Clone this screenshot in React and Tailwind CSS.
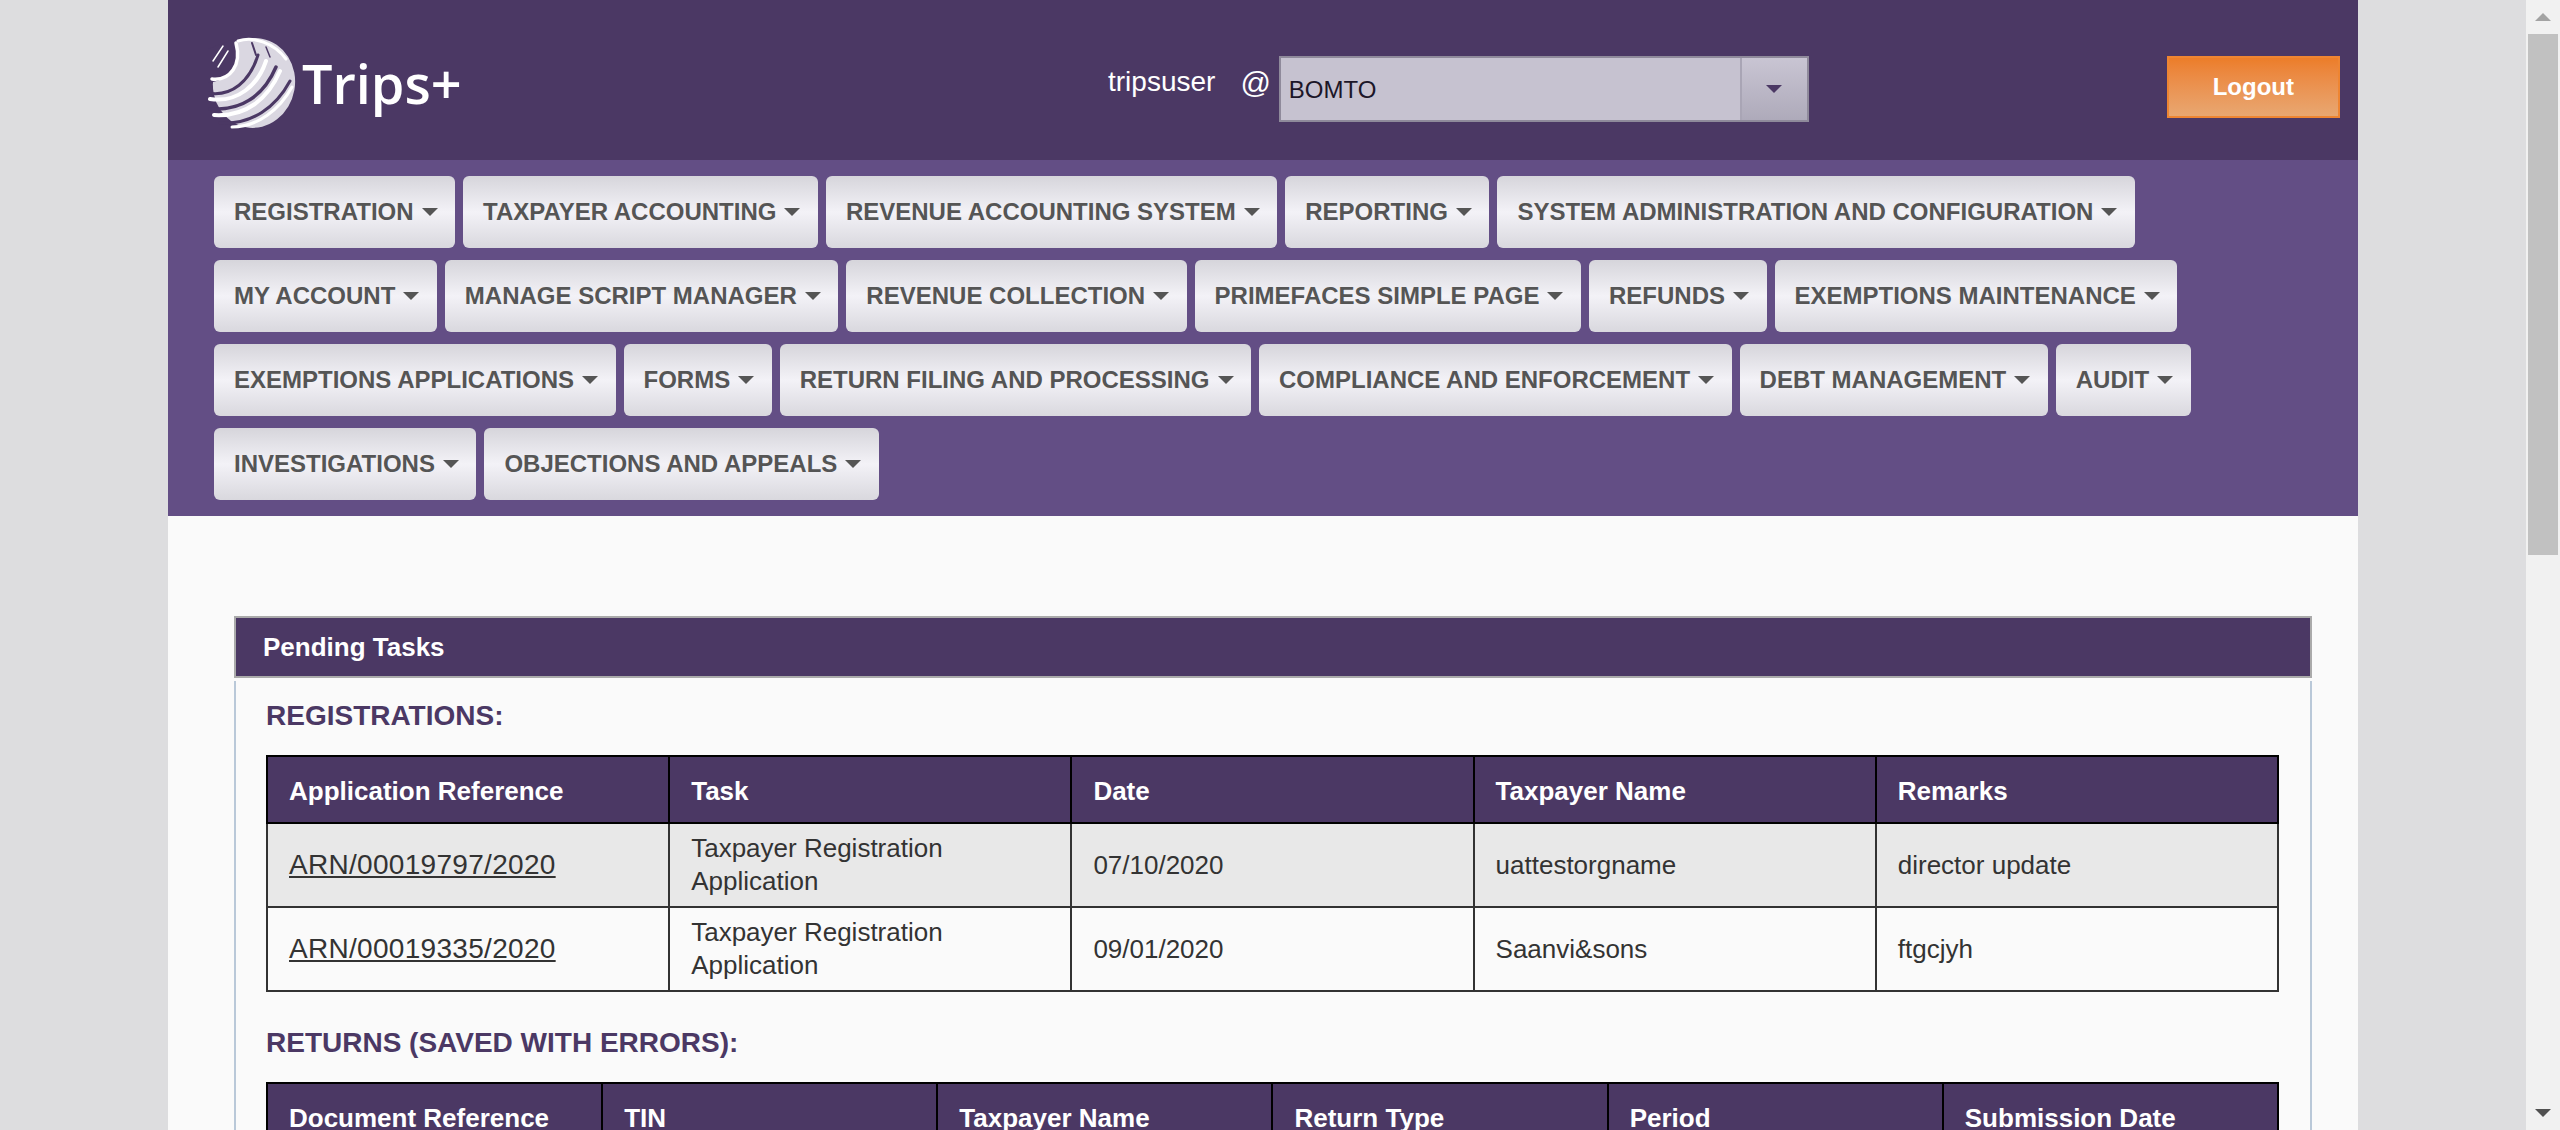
import React from 'react';

const menuRows = [
  ['REGISTRATION', 'TAXPAYER ACCOUNTING', 'REVENUE ACCOUNTING SYSTEM', 'REPORTING', 'SYSTEM ADMINISTRATION AND CONFIGURATION'],
  ['MY ACCOUNT', 'MANAGE SCRIPT MANAGER', 'REVENUE COLLECTION', 'PRIMEFACES SIMPLE PAGE', 'REFUNDS', 'EXEMPTIONS MAINTENANCE'],
  ['EXEMPTIONS APPLICATIONS', 'FORMS', 'RETURN FILING AND PROCESSING', 'COMPLIANCE AND ENFORCEMENT', 'DEBT MANAGEMENT', 'AUDIT'],
  ['INVESTIGATIONS', 'OBJECTIONS AND APPEALS'],
];

const registrations = [
  { ref: 'ARN/00019797/2020', date: '07/10/2020', name: 'uattestorgname', remarks: 'director update' },
  { ref: 'ARN/00019335/2020', date: '09/01/2020', name: 'Saanvi&sons', remarks: 'ftgcjyh' },
];

const returnColumns = ['Document Reference', 'TIN', 'Taxpayer Name', 'Return Type', 'Period', 'Submission Date'];
const registrationColumns = ['Application Reference', 'Task', 'Date', 'Taxpayer Name', 'Remarks'];

function Globe() {
  return (
    <svg width="88" height="92" viewBox="0 0 88 92" className="shrink-0">
      <ellipse cx="46" cy="46" rx="41" ry="45" fill="#dad7e1" transform="rotate(10 46 46)" />
      {/* dark bay on the upper left, then the gaps between the swooshes */}
      <path d="M0 12 L26 2 C36 20 28 42 0 46 Z" fill="#4b3864" />
      <g fill="none" stroke="#4b3864" strokeLinecap="round">
        <path d="M0 56 C24 60 42 44 50 18" strokeWidth="3" />
        <path d="M2 72 C34 74 56 58 68 30" strokeWidth="3.5" />
        <path d="M12 86 C44 88 68 70 82 44" strokeWidth="3" />
        <path d="M44 6 L48 18" strokeWidth="2" />
        <path d="M58 10 L62 20" strokeWidth="1.5" />
      </g>
      <g fill="none" stroke="#ffffff" strokeLinecap="round">
        <path d="M4 42 C22 44 34 28 28 6" strokeWidth="3.5" />
        <path d="M2 62 C30 66 50 48 58 24" strokeWidth="4" />
        <path d="M6 78 C38 80 60 62 72 34" strokeWidth="4" />
        <path d="M24 90 C50 90 72 72 84 50" strokeWidth="3" />
        <path d="M30 4 C46 -1 66 6 78 22" strokeWidth="3" />
        <path d="M5 24 L15 9" strokeWidth="1.5" />
        <path d="M10 30 L20 14" strokeWidth="1.5" />
      </g>
    </svg>
  );
}

function Caret({ color = 'border-t-[#555555]' }) {
  return <span className={`inline-block w-0 h-0 border-x-[8px] border-x-transparent border-t-[8px] ${color}`} />;
}

function Header() {
  return (
    <header className="h-[160px] bg-[#4b3864] flex items-center pl-[40px]">
      <div className="flex items-center w-[900px] mt-[5px]">
        <Globe />
        <span className="ml-[6px] text-white text-[54px] leading-none font-semibold font-['Open_Sans',sans-serif]">Trips+</span>
      </div>
      <div className="flex items-center mt-[18px] text-white text-[28px]">
        <span className="-mt-[15px]">tripsuser</span>
        <span className="ml-[25px] -mt-[14px] text-[30px]">@</span>
        <div className="ml-[8px] h-[66px] w-[530px] flex bg-[#c6c2d0] border-2 border-[#8f8a9b] text-[#1c1628] text-[24px]">
          <div className="flex-1 flex items-center pl-[8px] pt-[2px]">BOMTO</div>
          <div className="w-[67px] flex items-center justify-center border-l-2 border-[#a9a5b5] bg-linear-to-b from-[#c9c5d3] to-[#aeaaba]">
            <Caret color="border-t-[#4b3864]" />
          </div>
        </div>
      </div>
      <button className="ml-[358px] w-[173px] h-[62px] mt-[14px] border-2 border-[#ee8532] bg-linear-to-b from-[#ec7d28] to-[#e8a771] text-white text-[24px] font-bold">
        Logout
      </button>
    </header>
  );
}

function Nav() {
  return (
    <nav className="h-[356px] bg-[#634e85] pl-[46px] pt-[16px] flex flex-col gap-[12px]">
      {menuRows.map((row) => (
        <div key={row[0]} className="flex gap-[8px]">
          {row.map((item) => (
            <div
              key={item}
              className="h-[72px] pl-[20px] pr-[17.5px] flex items-center gap-[8px] rounded-[6px] bg-linear-to-b from-[#d6d5db] via-[#f3f2f7] to-[#d9d8de] text-[#555555] text-[24px] font-bold whitespace-nowrap"
            >
              {item}
              <Caret />
            </div>
          ))}
        </div>
      ))}
    </nav>
  );
}

function HeadCell({ children }) {
  return <th className="h-[67px] pl-[21px] pr-[20px] pt-[3px] border-2 border-black bg-[#4b3864] text-white text-[26px] font-bold text-left">{children}</th>;
}

function BodyCell({ children }) {
  return <td className="h-[84px] pl-[21px] pr-[20px] border-2 border-[#333333] text-[#333333] text-[26px] leading-[33px]">{children}</td>;
}

function Panel() {
  return (
    <section className="ml-[66px] mr-[46px] mt-[100px]">
      <div className="h-[62px] flex items-center pl-[27px] border-2 border-[#aaaaaa] bg-[#4b3864] text-white text-[26px] font-bold">
        Pending Tasks
      </div>
      <div className="mt-[3px] border-x-2 border-[#b9c8d8] pl-[30px] pr-[31px]">
        <h2 className="pt-[19px] pb-[23px] leading-[32px] text-[#4b3864] text-[28px] font-bold">REGISTRATIONS:</h2>
        <table className="w-full table-fixed border-collapse">
          <thead>
            <tr>
              {registrationColumns.map((c) => <HeadCell key={c}>{c}</HeadCell>)}
            </tr>
          </thead>
          <tbody>
            {registrations.map((r, idx) => (
              <tr key={r.ref} className={idx === 0 ? 'bg-[#e8e8e8]' : ''}>
                <BodyCell><a className="underline text-[28px] tracking-[0.3px]">{r.ref}</a></BodyCell>
                <BodyCell>Taxpayer Registration Application</BodyCell>
                <BodyCell>{r.date}</BodyCell>
                <BodyCell>{r.name}</BodyCell>
                <BodyCell>{r.remarks}</BodyCell>
              </tr>
            ))}
          </tbody>
        </table>
        <h2 className="pt-[35px] pb-[23px] leading-[32px] text-[#4b3864] text-[28px] font-bold">RETURNS (SAVED WITH ERRORS):</h2>
        <table className="w-full table-fixed border-collapse">
          <thead>
            <tr>
              {returnColumns.map((c) => <HeadCell key={c}>{c}</HeadCell>)}
            </tr>
          </thead>
        </table>
      </div>
    </section>
  );
}

function Scrollbar() {
  return (
    <div className="w-[34px] shrink-0 h-full bg-[#f1f1f1] flex flex-col items-center">
      <div className="h-[34px] flex items-center justify-center">
        <span className="w-0 h-0 border-x-[8px] border-x-transparent border-b-[8px] border-b-[#a3a3a3]" />
      </div>
      <div className="w-[30px] h-[521px] bg-[#c1c1c1]" />
      <div className="mt-auto h-[34px] flex items-center justify-center">
        <span className="w-0 h-0 border-x-[8px] border-x-transparent border-t-[8px] border-t-[#505050]" />
      </div>
    </div>
  );
}

export default function App() {
  return (
    <div className="h-screen overflow-hidden flex bg-[#dddddf] font-['Liberation_Sans',Arial,sans-serif]">
      <div className="flex-1 min-w-0 h-full overflow-hidden pl-[168px] pr-[168px]">
        <main className="h-full bg-[#fafafa]">
          <Header />
          <Nav />
          <Panel />
        </main>
      </div>
      <Scrollbar />
    </div>
  );
}
